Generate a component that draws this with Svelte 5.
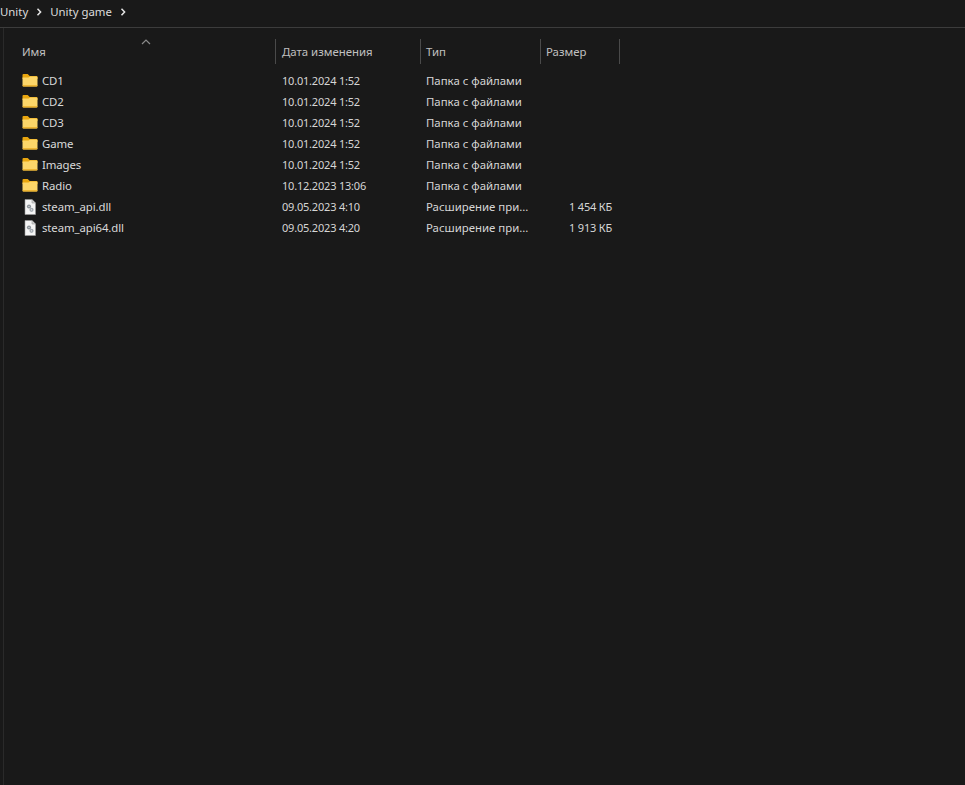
<script lang="ts">
	type Item = { name: string; date: string; kind: string; size?: string; file?: boolean };

	const items: Item[] = [
		{ name: 'CD1', date: '10.01.2024 1:52', kind: 'Папка с файлами' },
		{ name: 'CD2', date: '10.01.2024 1:52', kind: 'Папка с файлами' },
		{ name: 'CD3', date: '10.01.2024 1:52', kind: 'Папка с файлами' },
		{ name: 'Game', date: '10.01.2024 1:52', kind: 'Папка с файлами' },
		{ name: 'Images', date: '10.01.2024 1:52', kind: 'Папка с файлами' },
		{ name: 'Radio', date: '10.12.2023 13:06', kind: 'Папка с файлами' },
		{ name: 'steam_api.dll', date: '09.05.2023 4:10', kind: 'Расширение при...', size: '1 454 КБ', file: true },
		{ name: 'steam_api64.dll', date: '09.05.2023 4:20', kind: 'Расширение при...', size: '1 913 КБ', file: true }
	];
	const crumbs = ['Unity', 'Unity game'];
</script>

<div class="window">
	<nav class="crumbs">
		{#each crumbs as c}
			<span>{c}</span>
			<svg class="sep" width="6" height="8" viewBox="0 0 6 8"><path d="M1.5 .8 4.6 4 1.5 7.2" fill="none" stroke="#e6e6e6" stroke-width="1.5" /></svg>
		{/each}
	</nav>

	<main>
		<div class="head">
			<div class="hcell name">
				Имя
				<svg class="sort" width="10" height="6" viewBox="0 0 10 6"><path d="M1 5 5 1l4 4" fill="none" stroke="#8a8a8a" stroke-width="1.2" /></svg>
			</div>
			<div class="hcell date">Дата изменения</div>
			<div class="hcell">Тип</div>
			<div class="hcell last">Размер</div>
		</div>

		<div class="rows">
			{#each items as it (it.name)}
				<div class="row">
					<div class="cell name">
						{#if it.file}
							<svg width="16" height="16" viewBox="0 0 16 16">
								<path d="M3 .5h7l3.5 3.5v11.5H3z" fill="#f4f4f4" stroke="#9a9a9a" stroke-width=".6" />
								<path d="M10 .5V4h3.5" fill="#cfcfcf" stroke="#9a9a9a" stroke-width=".6" />
								<circle cx="7" cy="7.5" r="2.1" fill="#8d949a" />
								<circle cx="9.5" cy="10.8" r="2.1" fill="#a4abb1" />
								<circle cx="7" cy="7.5" r=".6" fill="#f4f4f4" />
								<circle cx="9.5" cy="10.8" r=".6" fill="#f4f4f4" />
							</svg>
						{:else}
							<svg class="folder" width="16" height="14" viewBox="0 0 16 14">
								<path d="M.5 2A1 1 0 0 1 1.5 1h4.2l2 2h6.8a1 1 0 0 1 1 1v2H.5z" fill="#e9a60f" />
								<path d="M.5 4.6h6l1.6-1.1h6.4a1 1 0 0 1 1 1v7.9a1 1 0 0 1-1 1h-13a1 1 0 0 1-1-1z" fill="#fcd669" />
								<path d="M.5 12.2h15v.2a1 1 0 0 1-1 1h-13a1 1 0 0 1-1-1z" fill="#e8ab22" />
							</svg>
						{/if}
						<span>{it.name}</span>
					</div>
					<div class="cell num">{it.date}</div>
					<div class="cell">{it.kind}</div>
					<div class="cell size num">{it.size ?? ''}</div>
				</div>
			{/each}
		</div>
	</main>
</div>

<style>
	:global(body) {
		margin: 0;
		background: #191919;
		font-family: "Noto Sans", "Open Sans", sans-serif;
		color: #d6d6d6;
		overflow: hidden;
	}
	.window {
		height: 785px;
		display: flex;
		flex-direction: column;
		background: #191919;
	}
	.crumbs {
		flex: none;
		display: flex;
		align-items: center;
		font-size: 11.4px;
		color: #dcdcdc;
		border-bottom: 1.5px solid #3c3c3c;
		padding-bottom: 5px;
		box-sizing: border-box;
		height: 28px;
	}
	.sep {
		margin: 1px 8px 0 8px;
	}
	main {
		flex: 1;
		margin-left: 3px;
		border-left: 1px solid #2a2a2a;
		padding-left: 17px;
	}
	.head,
	.row {
		display: grid;
		grid-template-columns: 254px 145px 120px 80px;
	}
	.head {
		margin-top: 11px;
		height: 25px;
		font-size: 11.4px;
		color: #c0c0c0;
	}
	.hcell {
		border-left: 1px solid #4a4a4a;
		padding-left: 5px;
		line-height: 25px;
		position: relative;
	}
	.hcell.date {
		padding-left: 6px;
	}
	.hcell.name {
		border-left: none;
		padding-left: 1px;
	}
	.hcell.last {
		border-right: 1px solid #4a4a4a;
	}
	.sort {
		position: absolute;
		left: 120px;
		top: 0;
	}
	.rows {
		margin-top: 6px;
	}
	.row {
		height: 21px;
		font-size: 11.4px;
		line-height: 21px;
	}
	.cell {
		padding-left: 6px;
		white-space: nowrap;
	}
	.cell.name {
		display: flex;
		align-items: center;
		gap: 4px;
		padding-left: 1px;
		color: #dadada;
		letter-spacing: -0.1px;
	}
	.folder {
		margin-bottom: 1px;
	}
	.cell.num {
		padding-left: 7px;
		font-size: 11px;
		letter-spacing: -0.2px;
	}
	.cell.size {
		text-align: right;
		padding-right: 8px;
	}
</style>
